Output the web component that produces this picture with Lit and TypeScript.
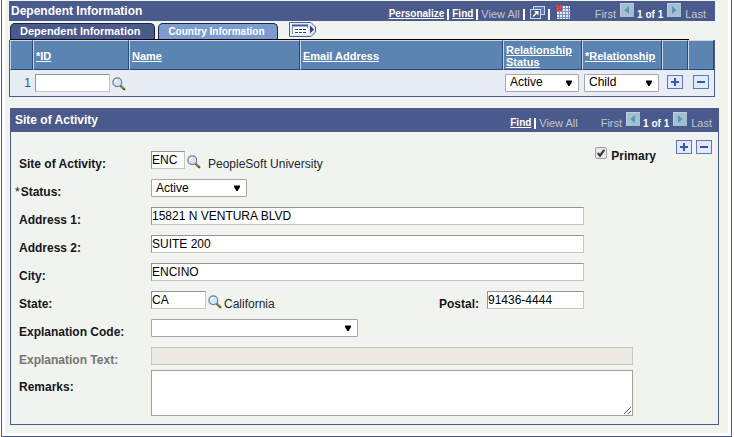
import { LitElement, html, css, svg, nothing } from "lit";
import { customElement } from "lit/decorators.js";

const shared = css`
  * { box-sizing: border-box; }
  button { font: inherit; padding: 0; margin: 0; border: 0; background: none; color: inherit; display: block; cursor: pointer; }
  svg { display: block; }
  input, select, textarea { font: 12px "Liberation Sans", Arial, sans-serif; color: #000; margin: 0; border-radius: 0; }
  .text { height: 18px; padding: 0 1px 0 0; border: 1px solid; border-color: #949494 #c6c6c6 #c6c6c6 #949494; background: #fff; min-width: 0; }
  .select { position: relative; display: block; height: 18px; }
  .select select { appearance: none; width: 100%; height: 18px; padding: 0 16px 1px 4px; border: 1px solid #a6a6a6; border-radius: 1px; background: #fff; }
  .select svg { position: absolute; right: 6px; top: 6px; pointer-events: none; }
  .pair { display: flex; align-items: center; }
`;

const lookup = (label: string) => html`<button class="lookup" aria-label=${label}>
  <svg width="14" height="14" viewBox="0 0 14 14">
    <path d="M8.5 8.5L12.2 12.2" stroke="#5b5a2c" stroke-width="2.4" stroke-linecap="round"/>
    <path d="M9 8.4L12 11.4" stroke="#c8c06c" stroke-width="1"/>
    <circle cx="5.3" cy="5.3" r="4.4" fill="#cfe6fa" stroke="#74818f" stroke-width="1.2"/>
    <path d="M2.8 5.4A2.6 2.6 0 0 1 5.4 2.8" fill="none" stroke="#fff" stroke-width="1.4"/>
  </svg></button>`;

const signButton = (plus: boolean) => html`<button class="sign" aria-label=${plus ? "Add row" : "Delete row"}>
  <svg width="16" height="14" viewBox="0 0 16 14" shape-rendering="crispEdges">
    <rect x=".5" y=".5" width="15" height="13" fill="#dfeafc" stroke="#5f78bd"/>
    <rect x="4" y="6" width="8" height="2" fill="#3c56a6"/>
    ${plus ? svg`<rect x="7" y="3" width="2" height="8" fill="#3c56a6"/>` : nothing}
  </svg></button>`;

const arrow = (next: boolean) => html`<button class="step" aria-label=${next ? "Next" : "Previous"}>
  <svg width="14" height="14" viewBox="0 0 14 14">
    <rect width="14" height="14" fill="#a3bfd2"/>
    <path d="M0 0H14V1H1V14H0Z" fill="#b9d0df"/>
    <path d=${next ? "M5 3L9.5 7L5 11Z" : "M9 3L4.5 7L9 11Z"} fill="#5f94b5"/>
  </svg></button>`;

const pager = () => html`<span class="pager">
  <span>First</span>${arrow(false)}<b>1 of 1</b>${arrow(true)}<span>Last</span></span>`;

const dropdown = (value: string, label: string | null, id = "") => html`<span class="select">
  <select id=${id || nothing} aria-label=${label ?? nothing}><option>${value}</option></select>
  <svg width="8" height="7" viewBox="0 0 8 7"><path d="M1 .5H7V2L4.6 6H3.4L1 2Z" fill="#000"/></svg></span>`;

const barStyles = css`
  .bar { display: flex; justify-content: space-between; background: #4a5a8c; color: #fff; font-weight: bold; }
  h2 { margin: 0; font-size: 12px; line-height: 20px; white-space: nowrap; }
  .nav { display: flex; font-size: 11px; line-height: 14px; font-weight: normal; color: #c3c6cd; white-space: nowrap; }
  .nav a { color: #fff; font-weight: bold; font-size: 10px; }
  .links { display: flex; gap: 3px; margin-top: 6px; }
  .rule { width: 2px; height: 11px; margin-top: 2px; background: #fff; }
  .pager { display: flex; }
  .pager span { margin-top: 6px; }
  .pager b { margin: 7px 4px 0 3px; font-size: 10px; color: #fff; }
  .pager .step { margin-top: 2px; height: 14px; }
  .pager span:first-child { margin-right: 4px; }
  .pager span:last-child { margin-left: 4px; }
`;

@customElement("dependent-grid")
export class DependentGrid extends LitElement {
  static styles = [shared, barStyles, css`
    :host { display: block; }
    .bar { height: 20px; padding: 0 9px 0 2px; }
    .nav { gap: 25px; }
    .popup { margin: -3px 0 0 2px; }
    .sheet { margin: -5px 0 0 3px; }
    .tabs { display: flex; height: 17px; margin: 2px 26px 0 1px; border-bottom: 1px solid #000; }
    .tab { height: 16px; border: 1px solid #1b2440; border-bottom: 0; border-radius: 5px 5px 0 0; color: #fff; font-weight: bold; font-size: 11px; line-height: 15px; padding: 0 14px 0 9px; white-space: nowrap; background: #4a5a8c; }
    .tab.off { background: #7c9ccf; font-size: 10px; padding: 0 12px 0 9px; margin-left: 3px; }
    .more { margin: -1px 0 0 11px; height: 15px; }
    table { width: 100%; table-layout: fixed; border-spacing: 0; border: 1px solid #4a5a8c; border-top: 0; background: #e8ecf4; }
    th { height: 30px; padding: 1px 0 0 2px; border: 1px solid; border-color: #c9d6e6 #2c4878 #2c4878 #c9d6e6; background: #5b84b3; text-align: left; font-size: 11px; line-height: 12px; }
    th a { color: #fff; }
    td { height: 26px; padding: 0 3px 1px 2px; }
    .c-row { width: 23px; } .c-id { width: 96px; } .c-name { width: 171px; } .c-status { width: 79px; } .c-rel { width: 80px; } .c-btn { width: 26px; }
    .num { text-align: right; padding-right: 2px; font-size: 12px; color: #1c5aa0; }
    .id { width: 76px; }
    .lookup { margin: 2px 0 0 2px; }
    .sign { margin: 0 0 2px 3px; }
  `];

  render() {
    return html`
      <div class="bar">
        <h2>Dependent Information</h2>
        <div class="nav">
          <span class="links">
            <a href="#">Personalize</a><i class="rule"></i><a href="#">Find</a><i class="rule"></i><span>View All</span><i class="rule"></i>
            <button class="popup" aria-label="Open in new window"><svg width="15" height="13" viewBox="0 0 15 13">
              <rect x="3.5" y=".5" width="11" height="8" fill="#5f78b4" stroke="#c7d6f1"/>
              <rect x=".5" y="3.5" width="10" height="9" fill="#4a5a8c" stroke="#c7d6f1"/>
              <path d="M3 10.500L7.500 6" stroke="#fff" stroke-width="1.500"/>
              <path d="M4 5H8.500V9.500Z" fill="#fff"/></svg></button>
            <i class="rule"></i>
            <button class="sheet" aria-label="Download"><svg width="14" height="14" viewBox="0 0 14 14" shape-rendering="crispEdges">
              <rect x="1" y="1" width="13" height="13" fill="#7f8ec4"/>
              ${[1, 4, 7, 10, 13].map(y => [1, 4, 7, 10, 13].map(x => svg`<rect x=${x} y=${y} width=${x === 13 ? 1 : 2} height=${y === 13 ? 1 : 2} fill="#e6e9f8"/>`))}
              <path d="M0 0H2L4 2V0H6V6H0V4H2L0 2Z" fill="#d8404a"/></svg></button>
          </span>
          ${pager()}
        </div>
      </div>
      <div class="tabs" role="tablist">
        <button class="tab" role="tab" aria-selected="true">Dependent Information</button>
        <button class="tab off" role="tab" aria-selected="false">Country Information</button>
        <button class="more" aria-label="Show all columns"><svg width="27" height="15" viewBox="0 0 27 15">
          <path d="M.5 .5H22L26.5 5V10L22 14.5H.5Z" fill="#e3ecfb" stroke="#4e5f93"/>
          <rect x="3" y="3" width="16" height="9" fill="#fff"/>
          <path d="M3 3.5H19" stroke="#3f57a0" stroke-width="2"/>
          <path d="M3.5 4V12M18.500 4V6" stroke="#8793b9"/>
          <path d="M6 7.500H18M6 10.500H18" stroke="#35426f" stroke-dasharray="3 1"/>
          <path d="M21 3.500L25 7.500L21 11.500Z" fill="#35426f"/></svg></button>
      </div>
      <table>
        <colgroup><col class="c-row"><col class="c-id"><col class="c-name"><col><col class="c-status"><col class="c-rel"><col class="c-btn"><col class="c-btn"></colgroup>
        <thead><tr>
          <th></th><th><a href="#">*ID</a></th><th><a href="#">Name</a></th><th><a href="#">Email Address</a></th>
          <th><a href="#">Relationship Status</a></th><th><a href="#">*Relationship</a></th><th></th><th></th>
        </tr></thead>
        <tbody><tr>
          <td class="num">1</td>
          <td><span class="pair"><input class="text id" aria-label="ID">${lookup("Look up ID")}</span></td>
          <td></td><td></td>
          <td>${dropdown("Active", "Relationship status")}</td>
          <td>${dropdown("Child", "Relationship")}</td>
          <td>${signButton(true)}</td><td>${signButton(false)}</td>
        </tr></tbody>
      </table>`;
  }
}

@customElement("activity-site")
export class ActivitySite extends LitElement {
  static styles = [shared, barStyles, css`
    :host { display: block; border: 1px solid #4a5a8c; border-top: 0; }
    .bar { height: 24px; padding: 2px 6px 0 4px; }
    .nav { gap: 23px; }
    .body { display: grid; grid-template-columns: 1fr auto; padding: 8px 6px 8px 8px; }
    .form { grid-area: 1 / 1 / 2 / 3; max-width: 614px; padding-top: 11px; }
    .side { grid-area: 1 / 2 / 2 / 3; align-self: start; display: flex; gap: 20px; align-items: flex-start; }
    .row { display: grid; grid-template-columns: 132px 1fr; height: 28px; }
    .row.last { height: 46px; margin-top: -5px; }
    label, .note { font-size: 12px; line-height: 16px; margin-top: 5px; white-space: nowrap; }
    label { font-weight: bold; color: #14161c; }
    .last label { margin-top: 9px; }
    .star { margin: 0 1px 0 -4px; font-weight: normal; }
    .muted { color: #747474; }
    .line { display: flex; align-items: flex-start; max-width: 433px; }
    .wide { max-width: 482px; width: 100%; }
    .full { width: 100%; }
    .site { width: 34px; } .state { width: 55px; } .zip { width: 97px; }
    .site-wide .select { width: 96px; }
    .code .select { width: 207px; }
    .lookup { margin: 4px 0 0 2px; }
    .note { margin-left: 7px; color: #23262e; }
    .note.near { margin-left: 2px; }
    .postal { margin-left: auto; margin-right: 8px; }
    .text:disabled { background: #eaeae2; border-color: #c6c6c6; }
    textarea { height: 46px; padding: 1px; border: 1px solid #a0a0a0; background: #fff; display: block; }
    .primary { display: flex; gap: 4px; margin-top: 7px; }
    .primary label { margin: 1px 0 0; }
    input[type="checkbox"] { appearance: none; width: 12px; height: 12px; border: 1px solid #a0a0a0; border-radius: 2px; background: #e9e9e9; }
    .box { position: relative; height: 12px; }
    .box svg { position: absolute; left: 0; top: 0; pointer-events: none; }
    .signs { display: flex; gap: 4px; }
  `];

  render() {
    return html`
      <div class="bar">
        <h2>Site of Activity</h2>
        <div class="nav">
          <span class="links"><a href="#">Find</a><i class="rule"></i><span>View All</span></span>
          ${pager()}
        </div>
      </div>
      <div class="body">
        <div class="form">
          <div class="row"><label for="site">Site of Activity:</label>
            <div class="line"><input id="site" class="text site" value="ENC">${lookup("Look up site")}<span class="note">PeopleSoft University</span></div></div>
          <div class="row"><label for="status"><span class="star">*</span>Status:</label>
            <div class="line site-wide">${dropdown("Active", null, "status")}</div></div>
          <div class="row"><label for="a1">Address 1:</label>
            <div class="line"><input id="a1" class="text full" value="15821 N VENTURA BLVD"></div></div>
          <div class="row"><label for="a2">Address 2:</label>
            <div class="line"><input id="a2" class="text full" value="SUITE 200"></div></div>
          <div class="row"><label for="city">City:</label>
            <div class="line"><input id="city" class="text full" value="ENCINO"></div></div>
          <div class="row"><label for="state">State:</label>
            <div class="line"><input id="state" class="text state" value="CA">${lookup("Look up state")}<span class="note near">California</span>
              <label class="postal" for="zip">Postal:</label><input id="zip" class="text zip" value="91436-4444"></div></div>
          <div class="row"><label for="code">Explanation Code:</label>
            <div class="line code">${dropdown("", null, "code")}</div></div>
          <div class="row"><label class="muted" for="why">Explanation Text:</label>
            <input id="why" class="text wide" disabled></div>
          <div class="row last"><label for="rem">Remarks:</label><textarea id="rem" class="wide"></textarea></div>
        </div>
        <div class="side">
          <div class="primary">
            <span class="box"><input type="checkbox" id="primary" checked>
              <svg width="12" height="12" viewBox="0 0 12 12"><path d="M2.800 6L5 8.600L9.200 2.800" fill="none" stroke="#3a3a3a" stroke-width="2.200"/></svg></span>
            <label for="primary">Primary</label>
          </div>
          <div class="signs">${signButton(true)}${signButton(false)}</div>
        </div>
      </div>`;
  }
}

@customElement("app-root")
export class AppRoot extends LitElement {
  static styles = css`
    :host { display: block; background: #fff; font: 12px "Liberation Sans", Arial, sans-serif; }
    .frame { margin: 0 2px 0 1px; padding: 0 3px 3px; border: 1px solid #4a5a8c; border-top: 0; }
    .page { padding: 1px 9px 8px 4px; background: #f1f3ee; }
    dependent-grid { margin-right: 4px; }
    activity-site { margin: 11px 0 0 1px; }
  `;

  render() {
    return html`<div class="frame"><main class="page"><dependent-grid></dependent-grid><activity-site></activity-site></main></div>`;
  }
}
